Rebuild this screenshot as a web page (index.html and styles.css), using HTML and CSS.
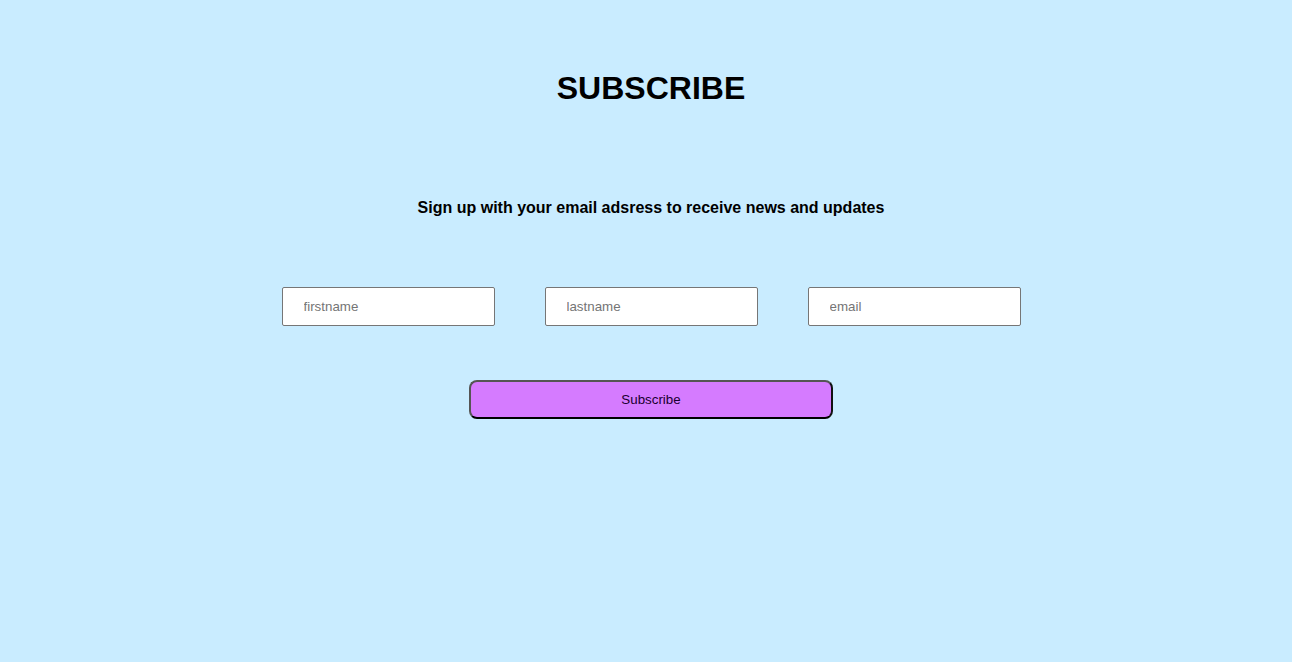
FILE: index.html
```html
<!DOCTYPE html>
<html>
<head>
<meta charset="utf-8">
<link rel="stylesheet" href="styles.css">
</head>
<body>
<main class="page">
  <h1 class="title">SUBSCRIBE</h1>
  <p class="subtitle">Sign up with your email adsress to receive news and updates</p>
  <form class="form">
    <div class="fields">
      <input class="field" type="text" placeholder="firstname">
      <input class="field" type="text" placeholder="lastname">
      <input class="field" type="email" placeholder="email">
    </div>
    <button class="submit" type="button">Subscribe</button>
  </form>
</main>
</body>
</html>
```
FILE: styles.css
```css
html, body {
  margin: 0;
  padding: 0;
  background: #c9ecff;
  height: 100%;
}
body {
  font-family: "Liberation Sans", Arial, sans-serif;
  color: #000;
}
.page {
  padding: 70px 0 0 10px;
  display: flex;
  flex-direction: column;
  align-items: center;
}
.title {
  margin: 0;
  font-size: 32px;
  font-weight: bold;
  line-height: 37px;
}
.subtitle {
  margin: 92px 0 0;
  font-size: 16px;
  font-weight: bold;
  line-height: 18px;
}
.form {
  margin-top: 70px;
  display: flex;
  flex-direction: column;
  align-items: center;
}
.fields {
  display: flex;
  gap: 50px;
}
.field {
  box-sizing: border-box;
  width: 213px;
  height: 39px;
  border: 1px solid #767676;
  border-radius: 2px;
  padding: 0 21px;
  font-family: "Liberation Sans", Arial, sans-serif;
  font-size: 13.333px;
  background: #fff;
  outline: none;
}
.field::placeholder {
  color: #757575;
}
.submit {
  box-sizing: border-box;
  margin-top: 54px;
  width: 364px;
  height: 39px;
  background: #d57bff;
  border: 2px solid;
  border-color: #555 #111 #000 #555;
  border-radius: 8px;
  font-family: "Liberation Sans", Arial, sans-serif;
  font-size: 13.333px;
  color: #1a0030;
}
```
